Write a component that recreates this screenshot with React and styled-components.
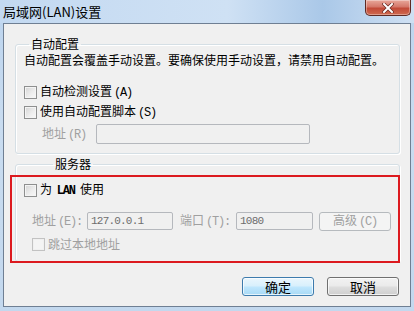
import React from 'react';
import styled, { createGlobalStyle } from 'styled-components';

const Global = createGlobalStyle`
  html, body { margin: 0; padding: 0; }
  body {
    font-family: "Noto Sans CJK SC", "Noto Sans", sans-serif;
    font-size: 12px;
    color: #000;
  }
`;

const Window = styled.div`
  width: 414px;
  height: 311px;
  display: flex;
  flex-direction: column;
  background: linear-gradient(180deg, #bcd4ee 0%, #c9dcf0 40%, #c3d8ee 100%);
  overflow: hidden;
`;

const TitleBar = styled.div`
  height: 23px;
  display: flex;
  align-items: flex-start;
  justify-content: space-between;
  background: linear-gradient(90deg, #c3d9f1 0%, #cfe1f4 55%, #aac8e8 78%, #cfe0f3 100%);
`;

const Title = styled.div`
  padding: 3px 0 0 3px;
  font-size: 13px;
  line-height: 17px;
  color: #000;
`;

const Close = styled.div`
  width: 44px;
  height: 15px;
  margin-right: 3px;
  border: 1px solid #5e2a24;
  border-top: none;
  border-radius: 0 0 5px 5px;
  background: linear-gradient(180deg, #e8a89b 0%, #d5786a 45%, #c24a38 55%, #cf6a50 100%);
  box-shadow: inset 0 0 0 1px rgba(255,255,255,0.35);
  display: flex;
  align-items: center;
  justify-content: center;
`;

const Client = styled.div`
  position: relative;
  flex: 1;
  margin: 0 3px 4px 3px;
  border: 1px solid #6f7f93;
  background: #f0f0f0;
  padding: 0 10px 0 11px;
  display: flex;
  flex-direction: column;
`;

const Group = styled.fieldset`
  margin: ${p => p.$top}px 0 0 0;
  padding: 0 0 ${p => p.$bottom}px ${p => p.$left}px;
  border: 1px solid #d5dfe5;
  border-radius: 3px;
  box-shadow: inset 1px 1px 0 #fff, 1px 1px 0 #fff;
  min-width: 0;
`;

const Legend = styled.legend`
  margin-left: ${p => p.$indent}px;
  padding: 0 2px;
  font-size: 12px;
  line-height: 16px;
`;

const Desc = styled.div`
  line-height: 16px;
  white-space: nowrap;
`;

const Row = styled.div`
  display: flex;
  align-items: center;
  height: 20px;
  margin-top: ${p => p.$top || 0}px;
  padding-left: ${p => p.$indent || 0}px;
  color: ${p => (p.$disabled ? '#a0a0a0' : '#000')};
  white-space: pre;
`;

const Text = styled.span`
  line-height: 16px;
  white-space: pre;
`;

const Box = styled.span`
  width: 11px;
  height: 11px;
  margin-right: 3px;
  border: 1px solid ${p => (p.$disabled ? '#c2c2c2' : '#8e8f8f')};
  background: ${p => (p.$disabled
    ? '#f4f4f4'
    : 'linear-gradient(135deg, #d4d4d4 0%, #eeeeee 60%, #f8f8f8 100%)')};
  box-shadow: inset 0 0 0 1px ${p => (p.$disabled ? '#f0f0f0' : '#f4f4f4')};
  flex: none;
`;

const Mono = styled.span`
  font-family: "Liberation Mono", "DejaVu Sans Mono", monospace;
  font-size: 12px;
  letter-spacing: -1.2px;
  font-weight: ${p => (p.$bold ? 700 : 400)};
  margin-left: 2px;
`;

const Label = styled.span`
  margin-left: ${p => p.$left || 0}px;
  color: #a0a0a0;
  line-height: 16px;
`;

const Input = styled.div`
  box-sizing: border-box;
  width: ${p => p.$w}px;
  height: ${p => p.$h || 20}px;
  margin-left: ${p => p.$left || 0}px;
  border: 1px solid #b5b8bd;
  border-radius: 2px;
  background: #f0f0f0;
  padding-left: 3px;
  display: flex;
  align-items: center;
  color: #6d6d6d;
  font-family: "Liberation Mono", "DejaVu Sans Mono", monospace;
  font-size: 11px;
  letter-spacing: -0.8px;
`;

const SmallButton = styled.div`
  box-sizing: border-box;
  width: 72px;
  height: 19px;
  margin-left: 6px;
  border: 1px solid #b6babe;
  border-radius: 3px;
  background: #f4f4f4;
  color: #a0a0a0;
  display: flex;
  align-items: center;
  justify-content: center;
`;

const Footer = styled.div`
  display: flex;
  justify-content: flex-end;
  gap: 13px;
  margin-top: 15px;
  padding-right: 1px;
`;

const Button = styled.div`
  box-sizing: border-box;
  width: 72px;
  height: 19px;
  border: 1px solid ${p => (p.$default ? '#3d7bad' : '#707070')};
  border-radius: 3px;
  background: ${p => (p.$default
    ? 'linear-gradient(180deg, #eaf6fd 0%, #d9f0fc 45%, #bee6fd 55%, #a7d9f5 100%)'
    : 'linear-gradient(180deg, #f2f2f2 0%, #ebebeb 45%, #dddddd 55%, #cfcfcf 100%)')};
  box-shadow: inset 0 0 0 1px rgba(255,255,255,0.7);
  display: flex;
  align-items: center;
  justify-content: center;
  font-size: 13px;
`;

const Highlight = styled.div`
  position: absolute;
  left: 6px;
  top: 151px;
  width: 390px;
  height: 88px;
  box-sizing: border-box;
  border: 2px solid #dc1a1f;
  pointer-events: none;
`;

const CloseIcon = () => (
  <svg width="12" height="10" viewBox="0 0 12 10">
    <path d="M2 1 L10 9 M10 1 L2 9" stroke="#6b2a22" strokeWidth="3.4" strokeLinecap="square" />
    <path d="M2 1 L10 9 M10 1 L2 9" stroke="#fff" strokeWidth="2" strokeLinecap="square" />
  </svg>
);

export default function App() {
  return (
    <>
      <Global />
      <Window>
        <TitleBar>
          <Title>局域网(LAN)设置</Title>
          <Close><CloseIcon /></Close>
        </TitleBar>
        <Client>
          <Group $top={12} $left={8} $bottom={9}>
            <Legend $indent={5}>自动配置</Legend>
            <Desc>自动配置会覆盖手动设置。要确保使用手动设置，请禁用自动配置。</Desc>
            <Row $top={14}>
              <Box /><Text>自动检测设置<Mono>(A)</Mono></Text>
            </Row>
            <Row>
              <Box /><Text>使用自动配置脚本<Mono>(S)</Mono></Text>
            </Row>
            <Row $top={2}>
              <Label $left={18}>地址<Mono>(R)</Mono></Label>
              <Input $w={214} $left={10} />
            </Row>
          </Group>
          <Group $top={2} $left={8} $bottom={7}>
            <Legend $indent={29}>服务器</Legend>
            <Row $top={8}>
              <Box /><Text>为 <Mono $bold>LAN</Mono>  使用</Text>
            </Row>
            <Row $top={11} $indent={8} $disabled>
              <Text>地址<Mono>(E):</Mono></Text>
              <Input $w={86} $h={18} $left={5}>127.0.0.1</Input>
              <Label $left={7}>端口<Mono>(T):</Mono></Label>
              <Input $w={77} $h={18} $left={6}>1080</Input>
              <SmallButton><Text>高级<Mono>(C)</Mono></Text></SmallButton>
            </Row>
            <Row $top={3} $indent={8} $disabled>
              <Box $disabled /><Text>跳过本地地址</Text>
            </Row>
          </Group>
          <Footer>
            <Button $default>确定</Button>
            <Button>取消</Button>
          </Footer>
          <Highlight />
        </Client>
      </Window>
    </>
  );
}
